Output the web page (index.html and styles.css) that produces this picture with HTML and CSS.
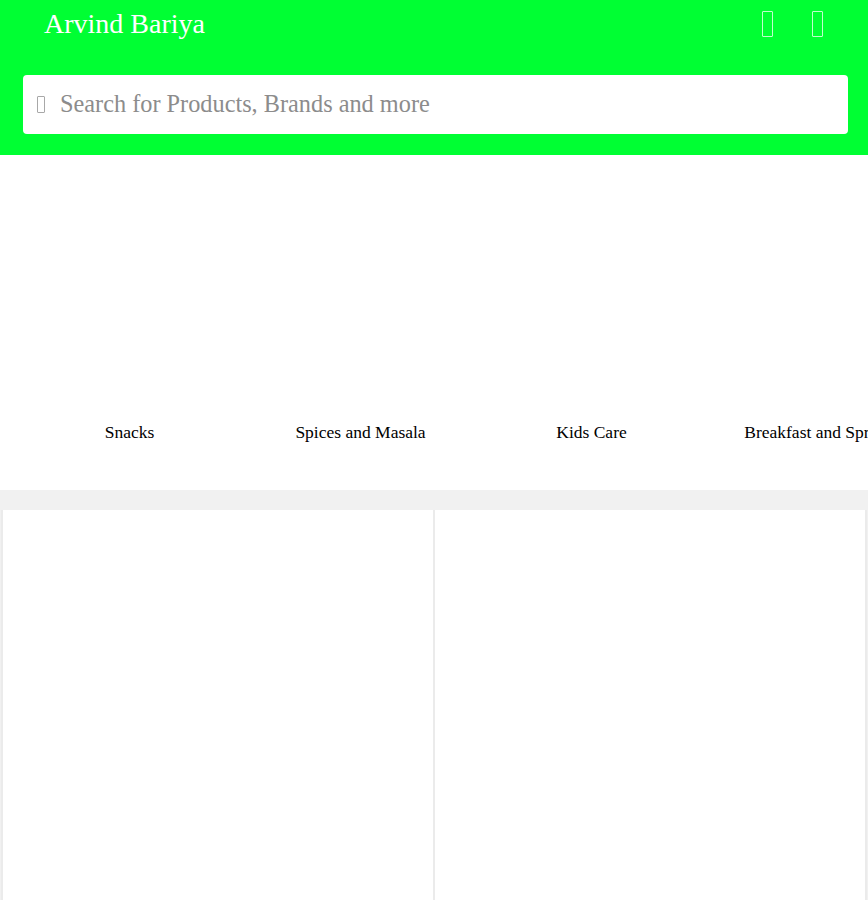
FILE: index.html
```html
<!DOCTYPE html>
<html>
<head>
<meta charset="utf-8">
<link rel="stylesheet" href="styles.css">
</head>
<body>
<header class="header">
  <div class="topbar">
    <div class="brand">Arvind Bariya</div>
    <div class="actions">
      <span class="tofu tofu-lg" aria-label="cart"></span>
      <span class="tofu tofu-lg" aria-label="account"></span>
    </div>
  </div>
  <div class="searchwrap">
    <div class="search">
      <span class="tofu tofu-sm"></span>
      <span class="placeholder">Search for Products, Brands and more</span>
    </div>
  </div>
</header>
<section class="categories">
  <div class="cat"><div class="cat-img"></div><div class="cat-name">Snacks</div></div>
  <div class="cat"><div class="cat-img"></div><div class="cat-name">Spices and Masala</div></div>
  <div class="cat"><div class="cat-img"></div><div class="cat-name">Kids Care</div></div>
  <div class="cat"><div class="cat-img"></div><div class="cat-name">Breakfast and Spreads</div></div>
</section>
<section class="products">
  <div class="card"></div>
  <div class="card"></div>
</section>
</body>
</html>
```
FILE: styles.css
```css
* { box-sizing: border-box; }
html, body { margin: 0; padding: 0; }
body {
  width: 868px;
  overflow-x: hidden;
  font-family: "Liberation Serif", "Times New Roman", serif;
  background: #f1f1f1;
}
.header {
  background: #00ff33;
  height: 155px;
  display: flex;
  flex-direction: column;
}
.topbar {
  height: 50px;
  display: flex;
  align-items: center;
  justify-content: space-between;
  padding: 0 45px 0 44px;
}
.brand {
  color: #ffffff;
  font-size: 28px;
  line-height: 30px;
  margin-top: -2px;
}
.actions {
  display: flex;
  gap: 39px;
  align-items: center;
  margin-top: -3px;
}
.tofu {
  display: inline-block;
  border: 1.5px solid rgba(255,255,255,0.75);
  border-radius: 1px;
}
.tofu-lg { width: 11px; height: 26px; }
.tofu-sm { width: 8px; height: 17px; border-color: #a8a8a8; border-width: 1.3px; }
.searchwrap {
  padding: 25px 20px 0 23px;
}
.search {
  background: #ffffff;
  height: 59px;
  border-radius: 4px;
  display: flex;
  align-items: center;
  padding-left: 14px;
  gap: 15px;
}
.placeholder {
  color: #8c8c8c;
  font-size: 24.3px;
  line-height: 28px;
  white-space: nowrap;
  margin-top: -2px;
}
.categories {
  background: #ffffff;
  height: 335px;
  display: flex;
  padding-left: 14px;
  overflow: hidden;
}
.cat {
  flex: 0 0 231px;
  display: flex;
  flex-direction: column;
  align-items: center;
}
.cat-img {
  height: 266px;
}
.cat-name {
  font-size: 17.5px;
  line-height: 22px;
  color: #000;
  white-space: nowrap;
}
.products {
  margin-top: 20px;
  display: flex;
  gap: 0;
  padding: 0 1px;
}
.card {
  flex: 1;
  height: 400px;
  background: #ffffff;
  border-left: 2px solid #ebebeb;
  border-right: 1px solid #ebebeb;
}
.card + .card {
  border-left: 1px solid #ebebeb;
  border-right: 2px solid #ebebeb;
}
```
